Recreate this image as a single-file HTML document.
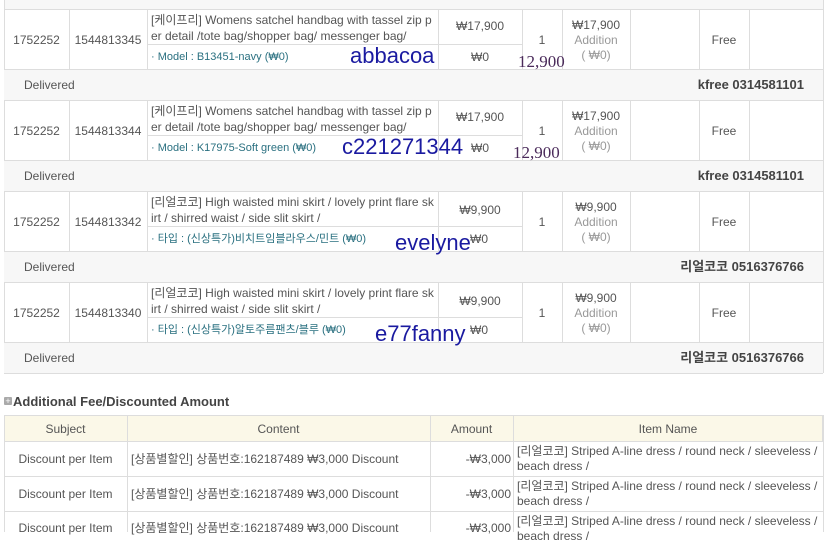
<!DOCTYPE html>
<html><head><meta charset="utf-8"><style>
*{margin:0;padding:0;box-sizing:border-box}
body{width:825px;height:532px;overflow:hidden;background:#fff;font-family:"Liberation Sans","Noto Sans CJK KR",sans-serif;font-size:12px;line-height:14px;color:#555;position:relative}
.a{position:absolute;white-space:nowrap}
.w{white-space:normal;word-break:break-all}
.c{position:absolute;text-align:center;white-space:nowrap}
.hl{position:absolute;height:1px;background:#ddd}
.vl{position:absolute;width:1px;background:#ddd}
.gray{position:absolute;left:4px;width:819px;background:#f7f7f7;border-top:1px solid #ddd;border-bottom:1px solid #ddd}
.hw{font-size:22px;line-height:26px;color:#1a1aa0;font-family:"Liberation Sans",sans-serif;z-index:2}
.pr{font-size:17px;line-height:20px;color:#4a2a5a;font-family:"Liberation Serif",serif;z-index:2}
.opt{color:#2a7080;font-size:11px}
.sm{color:#999;font-size:12px}
.bold{font-weight:bold;color:#444;font-size:13px}
</style></head><body>
<div class="gray" style="top:-1px;height:11px"></div>
<div class="vl" style="left:4px;top:0;height:373px"></div>
<div class="vl" style="left:823px;top:0;height:373px"></div>

<!-- row 1 -->
<div class="vl" style="left:69px;top:9px;height:60px"></div>
<div class="vl" style="left:147px;top:9px;height:60px"></div>
<div class="vl" style="left:438px;top:9px;height:60px"></div>
<div class="vl" style="left:522px;top:9px;height:60px"></div>
<div class="vl" style="left:562px;top:9px;height:60px"></div>
<div class="vl" style="left:630px;top:9px;height:60px"></div>
<div class="vl" style="left:699px;top:9px;height:60px"></div>
<div class="vl" style="left:749px;top:9px;height:60px"></div>
<div class="hl" style="left:147px;top:44px;width:375px"></div>
<div class="c" style="left:4px;width:65px;top:33px">1752252</div>
<div class="c" style="left:69px;width:78px;top:33px">1544813345</div>
<div class="a w" style="left:151px;top:12px;width:287px;line-height:16px">[케이프리] Womens satchel handbag with tassel zip per detail /tote bag/shopper bag/ messenger bag/</div>
<div class="a opt" style="left:151px;top:50px">· Model : B13451-navy (₩0)</div>
<div class="a hw" style="left:350px;top:43px">abbacoa</div>
<div class="c" style="left:438px;width:84px;top:19px">₩17,900</div>
<div class="c" style="left:438px;width:84px;top:50px">₩0</div>
<div class="c" style="left:522px;width:40px;top:33px">1</div>
<div class="a pr" style="left:518px;top:52px">12,900</div>
<div class="c" style="left:562px;width:68px;top:18px">₩17,900</div>
<div class="c sm" style="left:562px;width:68px;top:33px">Addition</div>
<div class="c sm" style="left:562px;width:68px;top:48px">( ₩0)</div>
<div class="c" style="left:699px;width:50px;top:33px">Free</div>
<div class="gray" style="top:69px;height:32px"></div>
<div class="a" style="left:24px;top:78px">Delivered</div>
<div class="a bold" style="right:21px;top:78px">kfree 0314581101</div>

<!-- row 2 -->
<div class="vl" style="left:69px;top:100px;height:60px"></div>
<div class="vl" style="left:147px;top:100px;height:60px"></div>
<div class="vl" style="left:438px;top:100px;height:60px"></div>
<div class="vl" style="left:522px;top:100px;height:60px"></div>
<div class="vl" style="left:562px;top:100px;height:60px"></div>
<div class="vl" style="left:630px;top:100px;height:60px"></div>
<div class="vl" style="left:699px;top:100px;height:60px"></div>
<div class="vl" style="left:749px;top:100px;height:60px"></div>
<div class="hl" style="left:147px;top:135px;width:375px"></div>
<div class="c" style="left:4px;width:65px;top:124px">1752252</div>
<div class="c" style="left:69px;width:78px;top:124px">1544813344</div>
<div class="a w" style="left:151px;top:103px;width:287px;line-height:16px">[케이프리] Womens satchel handbag with tassel zip per detail /tote bag/shopper bag/ messenger bag/</div>
<div class="a opt" style="left:151px;top:141px">· Model : K17975-Soft green (₩0)</div>
<div class="a hw" style="left:342px;top:134px">c221271344</div>
<div class="c" style="left:438px;width:84px;top:110px">₩17,900</div>
<div class="c" style="left:438px;width:84px;top:141px">₩0</div>
<div class="c" style="left:522px;width:40px;top:124px">1</div>
<div class="a pr" style="left:513px;top:143px">12,900</div>
<div class="c" style="left:562px;width:68px;top:109px">₩17,900</div>
<div class="c sm" style="left:562px;width:68px;top:124px">Addition</div>
<div class="c sm" style="left:562px;width:68px;top:139px">( ₩0)</div>
<div class="c" style="left:699px;width:50px;top:124px">Free</div>
<div class="gray" style="top:160px;height:32px"></div>
<div class="a" style="left:24px;top:169px">Delivered</div>
<div class="a bold" style="right:21px;top:169px">kfree 0314581101</div>

<!-- row 3 -->
<div class="vl" style="left:69px;top:191px;height:60px"></div>
<div class="vl" style="left:147px;top:191px;height:60px"></div>
<div class="vl" style="left:438px;top:191px;height:60px"></div>
<div class="vl" style="left:522px;top:191px;height:60px"></div>
<div class="vl" style="left:562px;top:191px;height:60px"></div>
<div class="vl" style="left:630px;top:191px;height:60px"></div>
<div class="vl" style="left:699px;top:191px;height:60px"></div>
<div class="vl" style="left:749px;top:191px;height:60px"></div>
<div class="hl" style="left:147px;top:226px;width:375px"></div>
<div class="c" style="left:4px;width:65px;top:215px">1752252</div>
<div class="c" style="left:69px;width:78px;top:215px">1544813342</div>
<div class="a w" style="left:151px;top:194px;width:285px;line-height:16px">[리얼코코] High waisted mini skirt / lovely print flare skirt / shirred waist / side slit skirt /</div>
<div class="a opt" style="left:151px;top:232px">· 타입 : (신상특가)비치트임블라우스/민트 (₩0)</div>
<div class="a hw" style="left:395px;top:230px">evelyne</div>
<div class="c" style="left:438px;width:84px;top:203px">₩9,900</div>
<div class="a" style="left:470px;top:232px">₩0</div>
<div class="c" style="left:522px;width:40px;top:215px">1</div>
<div class="c" style="left:562px;width:68px;top:200px">₩9,900</div>
<div class="c sm" style="left:562px;width:68px;top:215px">Addition</div>
<div class="c sm" style="left:562px;width:68px;top:230px">( ₩0)</div>
<div class="c" style="left:699px;width:50px;top:215px">Free</div>
<div class="gray" style="top:251px;height:32px"></div>
<div class="a" style="left:24px;top:260px">Delivered</div>
<div class="a bold" style="right:21px;top:260px">리얼코코 0516376766</div>

<!-- row 4 -->
<div class="vl" style="left:69px;top:282px;height:60px"></div>
<div class="vl" style="left:147px;top:282px;height:60px"></div>
<div class="vl" style="left:438px;top:282px;height:60px"></div>
<div class="vl" style="left:522px;top:282px;height:60px"></div>
<div class="vl" style="left:562px;top:282px;height:60px"></div>
<div class="vl" style="left:630px;top:282px;height:60px"></div>
<div class="vl" style="left:699px;top:282px;height:60px"></div>
<div class="vl" style="left:749px;top:282px;height:60px"></div>
<div class="hl" style="left:147px;top:317px;width:375px"></div>
<div class="c" style="left:4px;width:65px;top:306px">1752252</div>
<div class="c" style="left:69px;width:78px;top:306px">1544813340</div>
<div class="a w" style="left:151px;top:285px;width:285px;line-height:16px">[리얼코코] High waisted mini skirt / lovely print flare skirt / shirred waist / side slit skirt /</div>
<div class="a opt" style="left:151px;top:323px">· 타입 : (신상특가)알토주름팬츠/블루 (₩0)</div>
<div class="a hw" style="left:375px;top:321px">e77fanny</div>
<div class="c" style="left:438px;width:84px;top:294px">₩9,900</div>
<div class="a" style="left:470px;top:323px">₩0</div>
<div class="c" style="left:522px;width:40px;top:306px">1</div>
<div class="c" style="left:562px;width:68px;top:291px">₩9,900</div>
<div class="c sm" style="left:562px;width:68px;top:306px">Addition</div>
<div class="c sm" style="left:562px;width:68px;top:321px">( ₩0)</div>
<div class="c" style="left:699px;width:50px;top:306px">Free</div>
<div class="gray" style="top:342px;height:32px"></div>
<div class="a" style="left:24px;top:351px">Delivered</div>
<div class="a bold" style="right:21px;top:351px">리얼코코 0516376766</div>

<!-- section 2 -->
<div class="a" style="left:4px;top:397px;width:8px;height:8px;background:#aaa;border-radius:1px"></div>
<div class="a" style="left:4px;top:397px;width:8px;color:#fff;font-size:9px;line-height:8px;text-align:center">+</div>
<div class="a" style="left:13px;top:395px;font-weight:bold;color:#444;font-size:13px">Additional Fee/Discounted Amount</div>

<div class="a" style="left:4px;top:415px;width:819px;height:27px;background:#fbf8e8;border:1px solid #ddd"></div>
<div class="vl" style="left:4px;top:415px;height:117px"></div>
<div class="vl" style="left:127px;top:415px;height:117px"></div>
<div class="vl" style="left:430px;top:415px;height:117px"></div>
<div class="vl" style="left:513px;top:415px;height:117px"></div>
<div class="vl" style="left:823px;top:415px;height:117px"></div>
<div class="hl" style="left:4px;top:476px;width:819px"></div>
<div class="hl" style="left:4px;top:511px;width:819px"></div>
<div class="c" style="left:4px;width:123px;top:422px">Subject</div>
<div class="c" style="left:127px;width:303px;top:422px">Content</div>
<div class="c" style="left:430px;width:83px;top:422px">Amount</div>
<div class="c" style="left:513px;width:310px;top:422px">Item Name</div>

<div class="c" style="left:4px;width:123px;top:452px">Discount per Item</div>
<div class="a" style="left:131px;top:452px">[상품별할인] 상품번호:162187489 ₩3,000 Discount</div>
<div class="a" style="right:314px;top:452px">-₩3,000</div>
<div class="a w" style="left:517px;top:444px;width:306px;line-height:15px">[리얼코코] Striped A-line dress / round neck / sleeveless / beach dress /</div>

<div class="c" style="left:4px;width:123px;top:487px">Discount per Item</div>
<div class="a" style="left:131px;top:487px">[상품별할인] 상품번호:162187489 ₩3,000 Discount</div>
<div class="a" style="right:314px;top:487px">-₩3,000</div>
<div class="a w" style="left:517px;top:479px;width:306px;line-height:15px">[리얼코코] Striped A-line dress / round neck / sleeveless / beach dress /</div>

<div class="c" style="left:4px;width:123px;top:521px">Discount per Item</div>
<div class="a" style="left:131px;top:521px">[상품별할인] 상품번호:162187489 ₩3,000 Discount</div>
<div class="a" style="right:314px;top:521px">-₩3,000</div>
<div class="a w" style="left:517px;top:514px;width:306px;line-height:15px">[리얼코코] Striped A-line dress / round neck / sleeveless / beach dress /</div>
</body></html>
